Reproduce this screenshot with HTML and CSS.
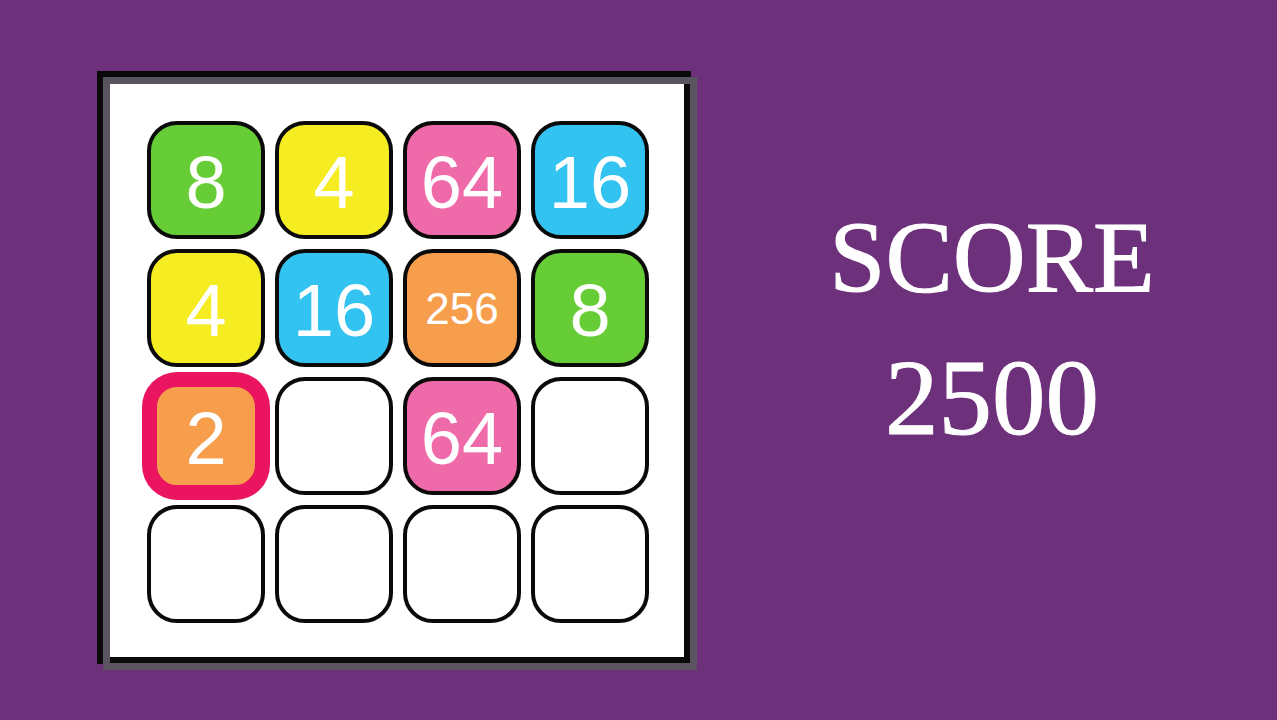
FILE: index.html
```html
<!doctype html>
<html lang="en">

<head>
  <meta charset="utf-8">
  <title>2048</title>
  <meta name="viewport" content="width=device-width,initial-scale=1.0">
  <link rel="stylesheet" href="styles.css">
</head>

<body>

  <main class="game">
    <section class="board">
      <div class="grid">
        <div class="tile t8">8</div>
        <div class="tile t4">4</div>
        <div class="tile t64">64</div>
        <div class="tile t16">16</div>

        <div class="tile t4">4</div>
        <div class="tile t16">16</div>
        <div class="tile t256">256</div>
        <div class="tile t8">8</div>

        <div class="tile t2 selected">2</div>
        <div class="tile"></div>
        <div class="tile t64">64</div>
        <div class="tile"></div>

        <div class="tile"></div>
        <div class="tile"></div>
        <div class="tile"></div>
        <div class="tile"></div>
      </div>
    </section>

    <section class="score">
      <h2 class="score-label">SCORE</h2>
      <p class="score-value">2500</p>
    </section>
  </main>

</body>

</html>
```

FILE: styles.css
```css
:root {
  --purple: #6d317c;
  --frameGrey: #5a5460;
  --black: #0a0a0a;
  --green: #66cd36;
  --yellow: #f6ec22;
  --pink: #ef6aa8;
  --blue: #32c3f0;
  --orange: #f79e4c;
  --hot: #ea1461;
}

html,
body {
  margin: 0;
  padding: 0;
}

body {
  background-color: var(--purple);
  font-family: "Liberation Sans", Arial, Helvetica, sans-serif;
  min-height: 100vh;
}

.game {
  display: flex;
  align-items: flex-start;
  padding: 77px 0 0 103px;
}

/* board frame: grey border with a black edge shifted up-left */
.board {
  box-sizing: content-box;
  width: 543px;
  height: 542px;
  padding: 37px 0 0 37px;
  background-color: #fff;
  border: 7px solid var(--frameGrey);
  box-shadow: -6px -6px 0 var(--black), inset -6px -6px 0 var(--black);
}

.grid {
  display: grid;
  grid-template-columns: repeat(4, 118px);
  grid-auto-rows: 118px;
  column-gap: 10px;
  row-gap: 10px;
}

.tile {
  box-sizing: border-box;
  display: flex;
  align-items: center;
  justify-content: center;
  padding-top: 6px;
  border: 4px solid var(--black);
  border-radius: 30px;
  background-color: #fff;
  color: #fff;
  font-size: 74px;
  line-height: 1;
}

.t2,
.t256 {
  background-color: var(--orange);
}

.t4 {
  background-color: var(--yellow);
}

.t8 {
  background-color: var(--green);
}

.t16 {
  background-color: var(--blue);
}

.t64 {
  background-color: var(--pink);
}

.t256 {
  font-size: 44px;
  padding-top: 2px;
}

.selected {
  border: 10px solid var(--hot);
  border-radius: 30px;
  box-shadow: 0 0 0 5px var(--hot);
}

.score {
  flex: 1;
  display: flex;
  flex-direction: column;
  align-items: center;
  padding: 131px 0 0 10px;
  color: #fff;
  font-family: "Liberation Serif", "Times New Roman", serif;
  font-weight: normal;
  -webkit-text-stroke: 1px #fff;
}

.score-label {
  margin: 0;
  font-size: 101px;
  font-weight: normal;
  line-height: 1;
}

.score-value {
  margin: 36px 0 0;
  font-size: 107px;
  line-height: 1;
}
```
